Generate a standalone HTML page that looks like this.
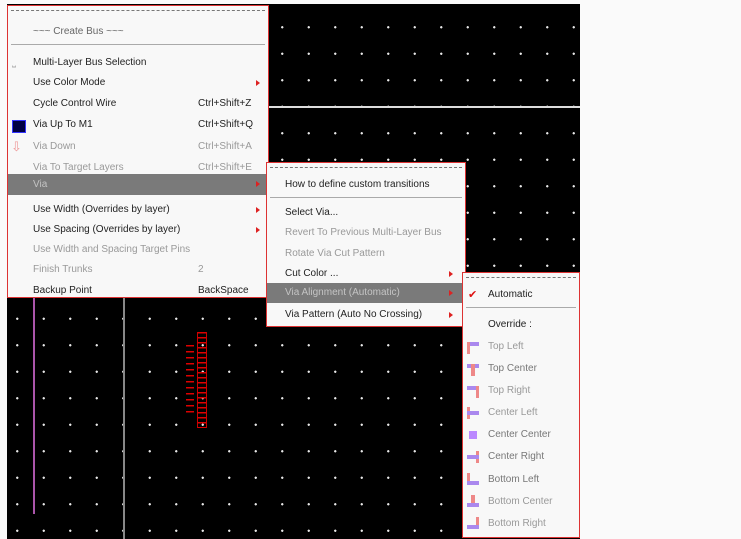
<!DOCTYPE html>
<html><head><style>
body{margin:0;width:741px;height:539px;background:#fafafa;position:relative;overflow:hidden;font-family:"Liberation Sans",sans-serif;font-size:10px;color:#222}
#cv{position:absolute;left:7px;top:4px;width:573px;height:535px;background-color:#000;background-image:radial-gradient(circle,#e8e8e8 1px,transparent 1.3px);background-size:26.5px 26.5px;background-position:-3px 10px}
.menu{position:absolute;background:#f8f8f8;border:1.5px solid #d33;box-sizing:border-box}
.dash{position:absolute;left:3px;right:3px;top:4px;border-top:1px dashed #777}
.sep{position:absolute;left:3px;right:3px;border-top:1.5px solid #aaa}
.it{position:absolute;left:0;right:0;height:20px;line-height:20px}
.it span{position:absolute}
.g{color:#999}
.hl{background:#7a7a7a;color:#c4c4c4}
.ar{position:absolute;width:0;height:0;border-left:4px solid #d22;border-top:3px solid transparent;border-bottom:3px solid transparent;top:7px}
</style></head><body>
<div id="cv"></div>
<div style="position:absolute;left:268px;top:106px;width:312px;height:1.5px;background:#ddd"></div>
<div style="position:absolute;left:123px;top:297px;width:1.5px;height:242px;background:#888"></div>
<div style="position:absolute;left:33px;top:298px;width:2px;height:216px;background:#a5a"></div>
<div style="position:absolute;left:197px;top:332px;width:8px;height:96px;border-left:1px solid #c00;border-right:1px solid #c00;background:repeating-linear-gradient(#d00 0 1.5px,transparent 1.5px 5px)"></div>
<div style="position:absolute;left:186px;top:343px;width:8px;height:70px;background:repeating-linear-gradient(transparent 0 2px,#d00 2px 3.5px,transparent 3.5px 6px)"></div>

<div class="menu" style="left:7px;top:5px;width:262px;height:293px">
<div class="dash"></div>
<div class="it" style="top:16px;color:#666"><span style="left:25px">~~~ Create Bus ~~~</span></div>
<div class="sep" style="top:38px"></div>
<div class="it" style="top:47px"><span style="left:4px;color:#aaa">⎵</span><span style="left:25px">Multi-Layer Bus Selection</span></div>
<div class="it" style="top:67px"><span style="left:25px">Use Color Mode</span><i class="ar" style="left:248px"></i></div>
<div class="it" style="top:88px"><span style="left:25px">Cycle Control Wire</span><span style="left:190px">Ctrl+Shift+Z</span></div>
<div class="it" style="top:109px"><span style="left:4px;top:5px;width:12px;height:11px;background:#004;border:1px solid #33f"></span><span style="left:25px">Via Up To M1</span><span style="left:190px">Ctrl+Shift+Q</span></div>
<div class="it g" style="top:131px"><span style="left:3px;color:#e99;font-size:13px">⇩</span><span style="left:25px">Via Down</span><span style="left:190px">Ctrl+Shift+A</span></div>
<div class="it g" style="top:152px"><span style="left:25px">Via To Target Layers</span><span style="left:190px">Ctrl+Shift+E</span></div>
<div class="it hl" style="top:168px;height:21px;line-height:21px"><span style="left:25px">Via</span><i class="ar" style="left:248px"></i></div>
<div class="it" style="top:194px"><span style="left:25px">Use Width (Overrides by layer)</span><i class="ar" style="left:248px"></i></div>
<div class="it" style="top:214px"><span style="left:25px">Use Spacing (Overrides by layer)</span><i class="ar" style="left:248px"></i></div>
<div class="it g" style="top:234px"><span style="left:25px">Use Width and Spacing Target Pins</span></div>
<div class="it g" style="top:254px"><span style="left:25px">Finish Trunks</span><span style="left:190px">2</span></div>
<div class="it" style="top:275px"><span style="left:25px">Backup Point</span><span style="left:190px">BackSpace</span></div>
</div>

<div class="menu" style="left:266px;top:162px;width:200px;height:165px">
<div class="dash"></div>
<div class="it" style="top:12px"><span style="left:18px">How to define custom transitions</span></div>
<div class="sep" style="top:34px"></div>
<div class="it" style="top:40px"><span style="left:18px">Select Via...</span></div>
<div class="it g" style="top:60px"><span style="left:18px">Revert To Previous Multi-Layer Bus</span></div>
<div class="it g" style="top:81px"><span style="left:18px">Rotate Via Cut Pattern</span></div>
<div class="it" style="top:101px"><span style="left:18px">Cut Color ...</span><i class="ar" style="left:182px"></i></div>
<div class="it hl" style="top:120px"><span style="left:18px">Via Alignment (Automatic)</span><i class="ar" style="left:182px"></i></div>
<div class="it" style="top:142px"><span style="left:18px">Via Pattern (Auto No Crossing)</span><i class="ar" style="left:182px"></i></div>
</div>

<div class="menu" style="left:462px;top:272px;width:118px;height:266px">
<div class="dash"></div>
<div class="it" style="top:12px"><span style="left:5px;color:#d11;font-size:11px">✔</span><span style="left:25px">Automatic</span></div>
<div class="sep" style="top:34px"></div>
<div class="it" style="top:42px"><span style="left:25px">Override :</span></div>
<div class="it g" style="top:64px"><span style="left:4px;top:5px;width:12px;height:4px;background:#a8e"></span><span style="left:4px;top:5px;width:3px;height:12px;background:#e88"></span><span style="left:25px">Top Left</span></div>
<div class="it" style="top:86px;color:#777"><span style="left:4px;top:5px;width:12px;height:4px;background:#a8e"></span><span style="left:8px;top:5px;width:4px;height:12px;background:#e88"></span><span style="left:25px">Top Center</span></div>
<div class="it g" style="top:108px"><span style="left:4px;top:5px;width:12px;height:4px;background:#a8e"></span><span style="left:13px;top:5px;width:3px;height:12px;background:#e88"></span><span style="left:25px">Top Right</span></div>
<div class="it g" style="top:130px"><span style="left:4px;top:4px;width:3px;height:12px;background:#e88"></span><span style="left:4px;top:8px;width:12px;height:4px;background:#a8e"></span><span style="left:25px">Center Left</span></div>
<div class="it" style="top:152px;color:#777"><span style="left:6px;top:6px;width:8px;height:8px;background:#b8f"></span><span style="left:25px">Center Center</span></div>
<div class="it" style="top:174px;color:#777"><span style="left:13px;top:4px;width:3px;height:12px;background:#e88"></span><span style="left:4px;top:8px;width:12px;height:4px;background:#a8e"></span><span style="left:25px">Center Right</span></div>
<div class="it" style="top:197px;color:#777"><span style="left:4px;top:3px;width:3px;height:12px;background:#e88"></span><span style="left:4px;top:11px;width:12px;height:4px;background:#a8e"></span><span style="left:25px">Bottom Left</span></div>
<div class="it g" style="top:219px"><span style="left:8px;top:3px;width:4px;height:12px;background:#e88"></span><span style="left:4px;top:11px;width:12px;height:4px;background:#a8e"></span><span style="left:25px">Bottom Center</span></div>
<div class="it g" style="top:241px"><span style="left:13px;top:3px;width:3px;height:12px;background:#e88"></span><span style="left:4px;top:11px;width:12px;height:4px;background:#a8e"></span><span style="left:25px">Bottom Right</span></div>
</div>
</body></html>
